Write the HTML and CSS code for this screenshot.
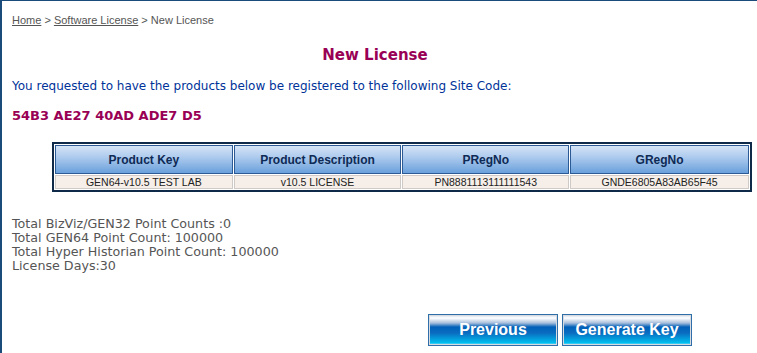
FILE: index.html
```html
<!DOCTYPE html>
<html>
<head>
<meta charset="utf-8">
<link rel="stylesheet" href="styles.css">
</head>
<body>
<div class="frame">
  <div class="crumbs"><a href="#">Home</a> &gt; <a href="#">Software License</a> &gt; New License</div>
  <h1 class="title">New License</h1>
  <p class="intro">You requested to have the products below be registered to the following Site Code:</p>
  <p class="code">54B3 AE27 40AD ADE7 D5</p>
  <table class="grid">
    <tr>
      <th class="c1">Product Key</th>
      <th class="c2">Product Description</th>
      <th class="c3">PRegNo</th>
      <th class="c4">GRegNo</th>
    </tr>
    <tr>
      <td>GEN64-v10.5 TEST LAB</td>
      <td>v10.5 LICENSE</td>
      <td>PN8881113111111543</td>
      <td>GNDE6805A83AB65F45</td>
    </tr>
  </table>
  <div class="totals">
    <div>Total BizViz/GEN32 Point Counts :0</div>
    <div>Total GEN64 Point Count: 100000</div>
    <div>Total Hyper Historian Point Count: 100000</div>
    <div>License Days:30</div>
  </div>
  <div class="actions">
    <button class="btn">Previous</button>
    <button class="btn">Generate Key</button>
  </div>
</div>
</body>
</html>
```
FILE: styles.css
```css
html, body {
  margin: 0;
  padding: 0;
  background: #fff;
}
.frame {
  box-sizing: border-box;
  height: 353px;
  border-top: 1px solid #1b4b7b;
  border-left: 2px solid #1b4b7b;
  padding: 12px 0 0 10px;
  font-family: "DejaVu Sans", Verdana, sans-serif;
}
.crumbs {
  font-family: "Liberation Sans", Arial, sans-serif;
  font-size: 11px;
  color: #555;
  line-height: 14px;
}
.crumbs a {
  color: #555;
  text-decoration: underline;
}
.title {
  margin: 18px 0 0 0;
  padding-right: 19px;
  text-align: center;
  font-family: "DejaVu Sans", Verdana, sans-serif;
  font-size: 15px;
  font-weight: bold;
  color: #990055;
  line-height: 20px;
}
.intro {
  margin: 13px 0 0 0;
  font-size: 12px;
  color: #003399;
  line-height: 16px;
}
.code {
  margin: 13px 0 0 0;
  font-size: 13px;
  font-weight: bold;
  color: #990055;
  line-height: 18px;
}
.grid {
  margin: 17px 0 0 40px;
  width: 700px;
  border: 2px solid #0e2a48;
  border-collapse: separate;
  border-spacing: 1px;
  font-family: "Liberation Sans", Arial, sans-serif;
}
.grid th {
  height: 27px;
  padding: 0;
  border: 1px solid #2c5a94;
  background: linear-gradient(#d6e4f6, #a9c8ec 45%, #6aa0dc);
  color: #0e2a55;
  font-size: 12px;
  font-weight: bold;
}
.grid .c1 { width: 176px; }
.grid .c2 { width: 166px; }
.grid .c3 { width: 165px; }
.grid .c4 { width: 177px; }
.grid td {
  padding: 0;
  height: 12px;
  border: 1px solid #cfcac6;
  background: #f6efe9;
  text-align: center;
  font-size: 10.5px;
  color: #222;
  line-height: 12px;
}
.totals {
  margin-top: 25px;
  font-size: 12.7px;
  color: #555;
  line-height: 14px;
}
.actions {
  margin: 41px 0 0 416px;
  display: flex;
  gap: 4px;
}
.btn {
  box-sizing: border-box;
  width: 130px;
  height: 32px;
  padding: 0;
  border: 1px solid #2f6ea8;
  box-shadow: inset 0 0 0 1px #d8dce0;
  background: linear-gradient(#d0d8e8 0, #ffffff 3px, #a8bedc 8px, #0060b8 12px, #0a6cc0 18px, #00c0f0 28px, #c8e8f4 30px);
  color: #fff;
  font-family: "Liberation Sans", Arial, sans-serif;
  font-size: 16px;
  font-weight: bold;
}
```
